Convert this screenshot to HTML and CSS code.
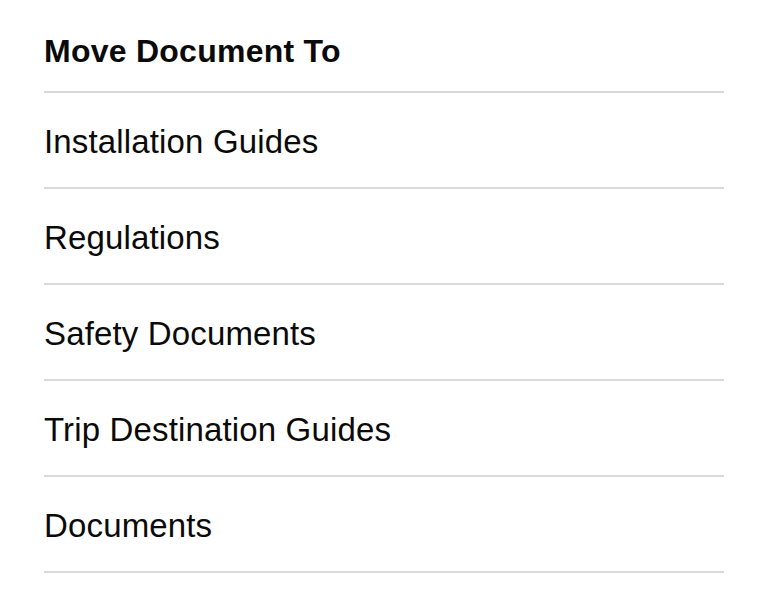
FILE: index.html
```html
<!DOCTYPE html>
<html lang="en">
<head>
<meta charset="utf-8">
<title>Move Document To</title>
<link rel="stylesheet" href="styles.css">
</head>
<body>
<div class="sheet">
  <h1 class="title">Move Document To</h1>
  <ul class="list">
    <li class="item">Installation Guides</li>
    <li class="item">Regulations</li>
    <li class="item">Safety Documents</li>
    <li class="item">Trip Destination Guides</li>
    <li class="item">Documents</li>
  </ul>
</div>
</body>
</html>
```

FILE: styles.css
```css
html, body {
  margin: 0;
  padding: 0;
  background: #ffffff;
}
body {
  font-family: "Liberation Sans", Arial, sans-serif;
  color: #0a0a0a;
}
.sheet {
  width: 680px;
  padding-left: 44px;
}
.title {
  margin: 0;
  padding: 31px 0 20px;
  font-size: 32px;
  line-height: 40px;
  font-weight: 700;
  letter-spacing: 0.25px;
  border-bottom: 2px solid #d9d9d9;
}
.list {
  list-style: none;
  margin: 0;
  padding: 0;
}
.item {
  padding: 29px 0 25px;
  font-size: 33px;
  line-height: 40px;
  letter-spacing: 0.15px;
  border-bottom: 2px solid #dadada;
}
```
